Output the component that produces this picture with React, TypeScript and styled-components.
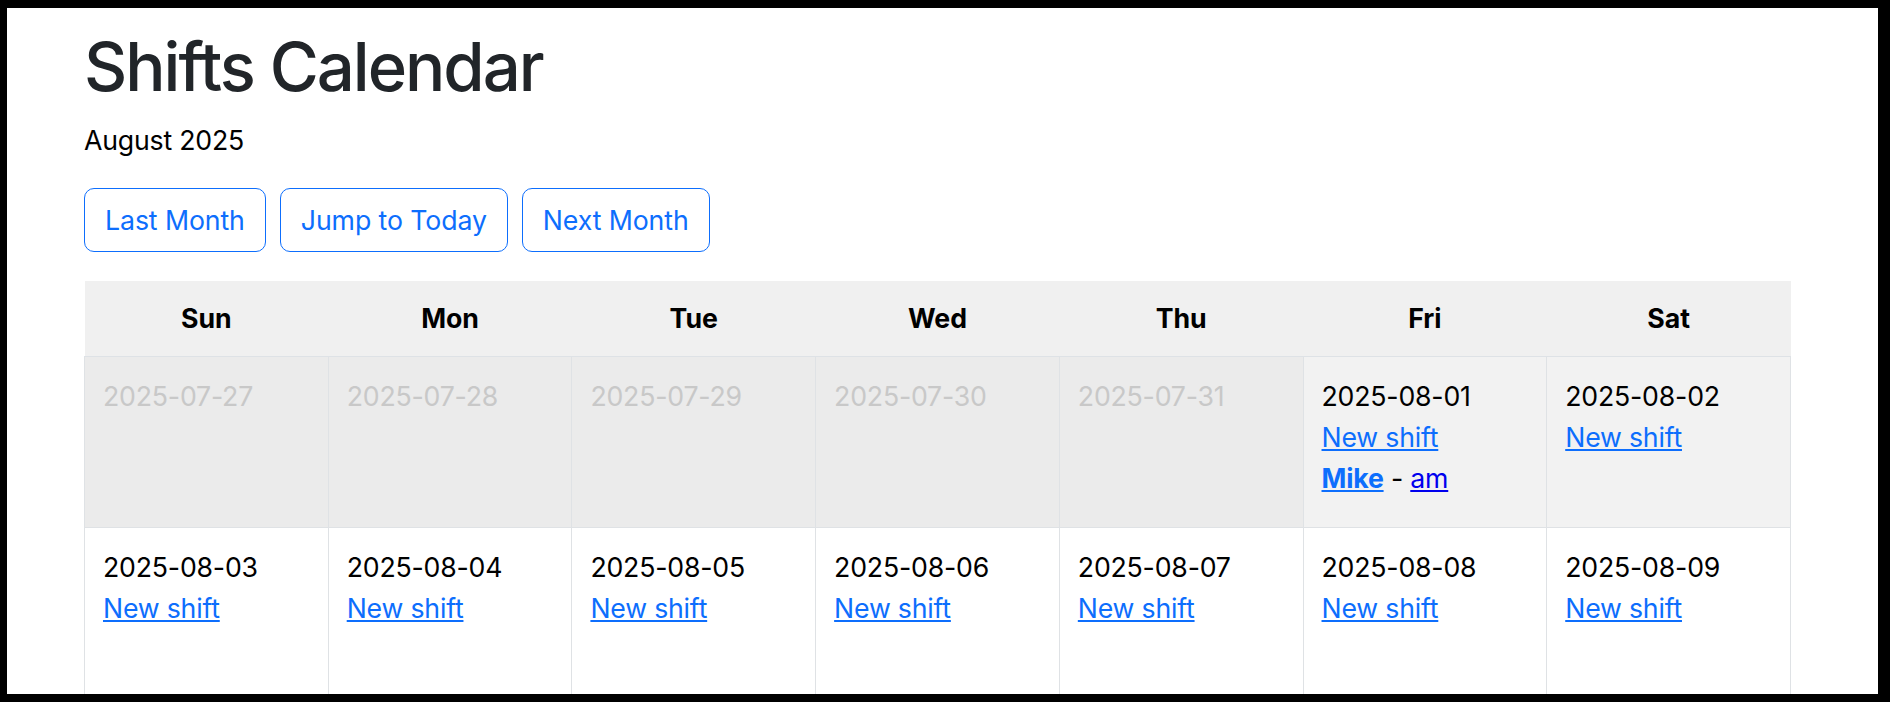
import { createGlobalStyle, styled } from "styled-components";
import type { FC } from "react";

const GlobalStyle = createGlobalStyle`
    html, body {
        margin: 0;
        padding: 0;
        background: #000;
    }

    body {
        font-family: Inter, "Liberation Sans", sans-serif;
        color: #212529;
    }
`;

const Frame = styled.div`
    box-sizing: border-box;
    width: 1890px;
    height: 702px;
    border-style: solid;
    border-color: #000;
    border-width: 8px 12px 8px 7px;
    background: #fff;
    overflow: hidden;
`;

const Container = styled.div`
    padding: 19px 0 0 77px;
    width: 1707px;
`;

const Title = styled.h1`
    margin: 0 0 13px;
    font-size: 67px;
    font-weight: 500;
    line-height: 1.2;
    letter-spacing: -2px;
    color: #212529;
`;

const MonthLabel = styled.p`
    margin: 0 0 28px;
    font-size: 26.7px;
    line-height: 40px;
    letter-spacing: -0.2px;
    color: #000;
`;

const Toolbar = styled.div`
    display: flex;
    gap: 14px;
    margin-bottom: 29px;
`;

const NavButton = styled.button`
    box-sizing: border-box;
    height: 64px;
    padding: 0 20px;
    border: 1.6px solid #0d6efd;
    border-radius: 10px;
    background: #fff;
    color: #0d6efd;
    font-family: inherit;
    font-size: 26.7px;
    line-height: 40px;
    letter-spacing: -0.1px;
    cursor: pointer;

    &:hover {
        background: #0d6efd;
        color: #fff;
    }
`;

const Table = styled.table`
    width: 100%;
    table-layout: fixed;
    border-collapse: collapse;
`;

const HeadCell = styled.th`
    padding: 17px 10px 18px;
    background: #f0f0f0;
    border-bottom: 1.6px solid #dee2e6;
    font-size: 26.7px;
    font-weight: 700;
    line-height: 40px;
    text-align: center;
    color: #000;
`;

const DayCell = styled.td<{ $outside: boolean; $striped: boolean }>`
    box-sizing: border-box;
    height: 171px;
    padding: 19px 18px;
    vertical-align: top;
    border: 1.8px solid #dfe2e5;
    border-top: none;
    background: ${({ $outside, $striped }) =>
        $outside ? "#ebebeb" : $striped ? "#f2f2f2" : "#fff"};
    font-size: 26.7px;
    line-height: 41px;
    letter-spacing: -0.2px;
    color: ${({ $outside }) => ($outside ? "#c8c8c8" : "#000")};
`;

const DayLine = styled.div`
    white-space: nowrap;
`;

const NewShiftLink = styled.a`
    color: #0d6efd;
    text-decoration: underline;
`;

const WorkerLink = styled.a`
    color: #0d6efd;
    font-weight: 700;
    text-decoration: underline;
`;

const ShiftLink = styled.a`
    color: #0000ee;
    text-decoration: underline;
`;

type Shift = { worker: string; period: string };

const shifts: Record<string, Shift[]> = {
    "2025-08-01": [{ worker: "Mike", period: "am" }]
};

const weekdays = ["Sun", "Mon", "Tue", "Wed", "Thu", "Fri", "Sat"];

const pad = (n: number) => String(n).padStart(2, "0");
const toKey = (d: Date) => `${d.getFullYear()}-${pad(d.getMonth() + 1)}-${pad(d.getDate())}`;

const buildWeeks = (year: number, month: number) => {
    const first = new Date(year, month, 1);
    const cursor = new Date(year, month, 1 - first.getDay());
    const weeks: Date[][] = [];

    while (weeks.length < 6) {
        const week: Date[] = [];
        for (let i = 0; i < 7; i++) {
            week.push(new Date(cursor));
            cursor.setDate(cursor.getDate() + 1);
        }
        weeks.push(week);
        if (cursor.getMonth() !== month) break;
    }

    return weeks;
};

const App: FC = () => {
    const year = 2025;
    const month = 7;
    const weeks = buildWeeks(year, month);

    return (
        <>
            <GlobalStyle />
            <Frame>
                <Container>
                    <Title>Shifts Calendar</Title>
                    <MonthLabel>August 2025</MonthLabel>
                    <Toolbar>
                        <NavButton>Last Month</NavButton>
                        <NavButton>Jump to Today</NavButton>
                        <NavButton>Next Month</NavButton>
                    </Toolbar>
                    <Table>
                        <thead>
                            <tr>
                                {weekdays.map((day) => (
                                    <HeadCell key={day}>{day}</HeadCell>
                                ))}
                            </tr>
                        </thead>
                        <tbody>
                            {weeks.map((week, row) => (
                                <tr key={row}>
                                    {week.map((day) => {
                                        const key = toKey(day);
                                        const outside = day.getMonth() !== month;
                                        return (
                                            <DayCell key={key} $outside={outside} $striped={row % 2 === 0}>
                                                <DayLine>{key}</DayLine>
                                                {!outside && (
                                                    <DayLine>
                                                        <NewShiftLink href="#">New shift</NewShiftLink>
                                                    </DayLine>
                                                )}
                                                {!outside && (shifts[key] || []).map((shift) => (
                                                    <DayLine key={shift.worker + shift.period}>
                                                        <WorkerLink href="#">{shift.worker}</WorkerLink>
                                                        {" - "}
                                                        <ShiftLink href="#">{shift.period}</ShiftLink>
                                                    </DayLine>
                                                ))}
                                            </DayCell>
                                        );
                                    })}
                                </tr>
                            ))}
                        </tbody>
                    </Table>
                </Container>
            </Frame>
        </>
    );
};

export default App;
